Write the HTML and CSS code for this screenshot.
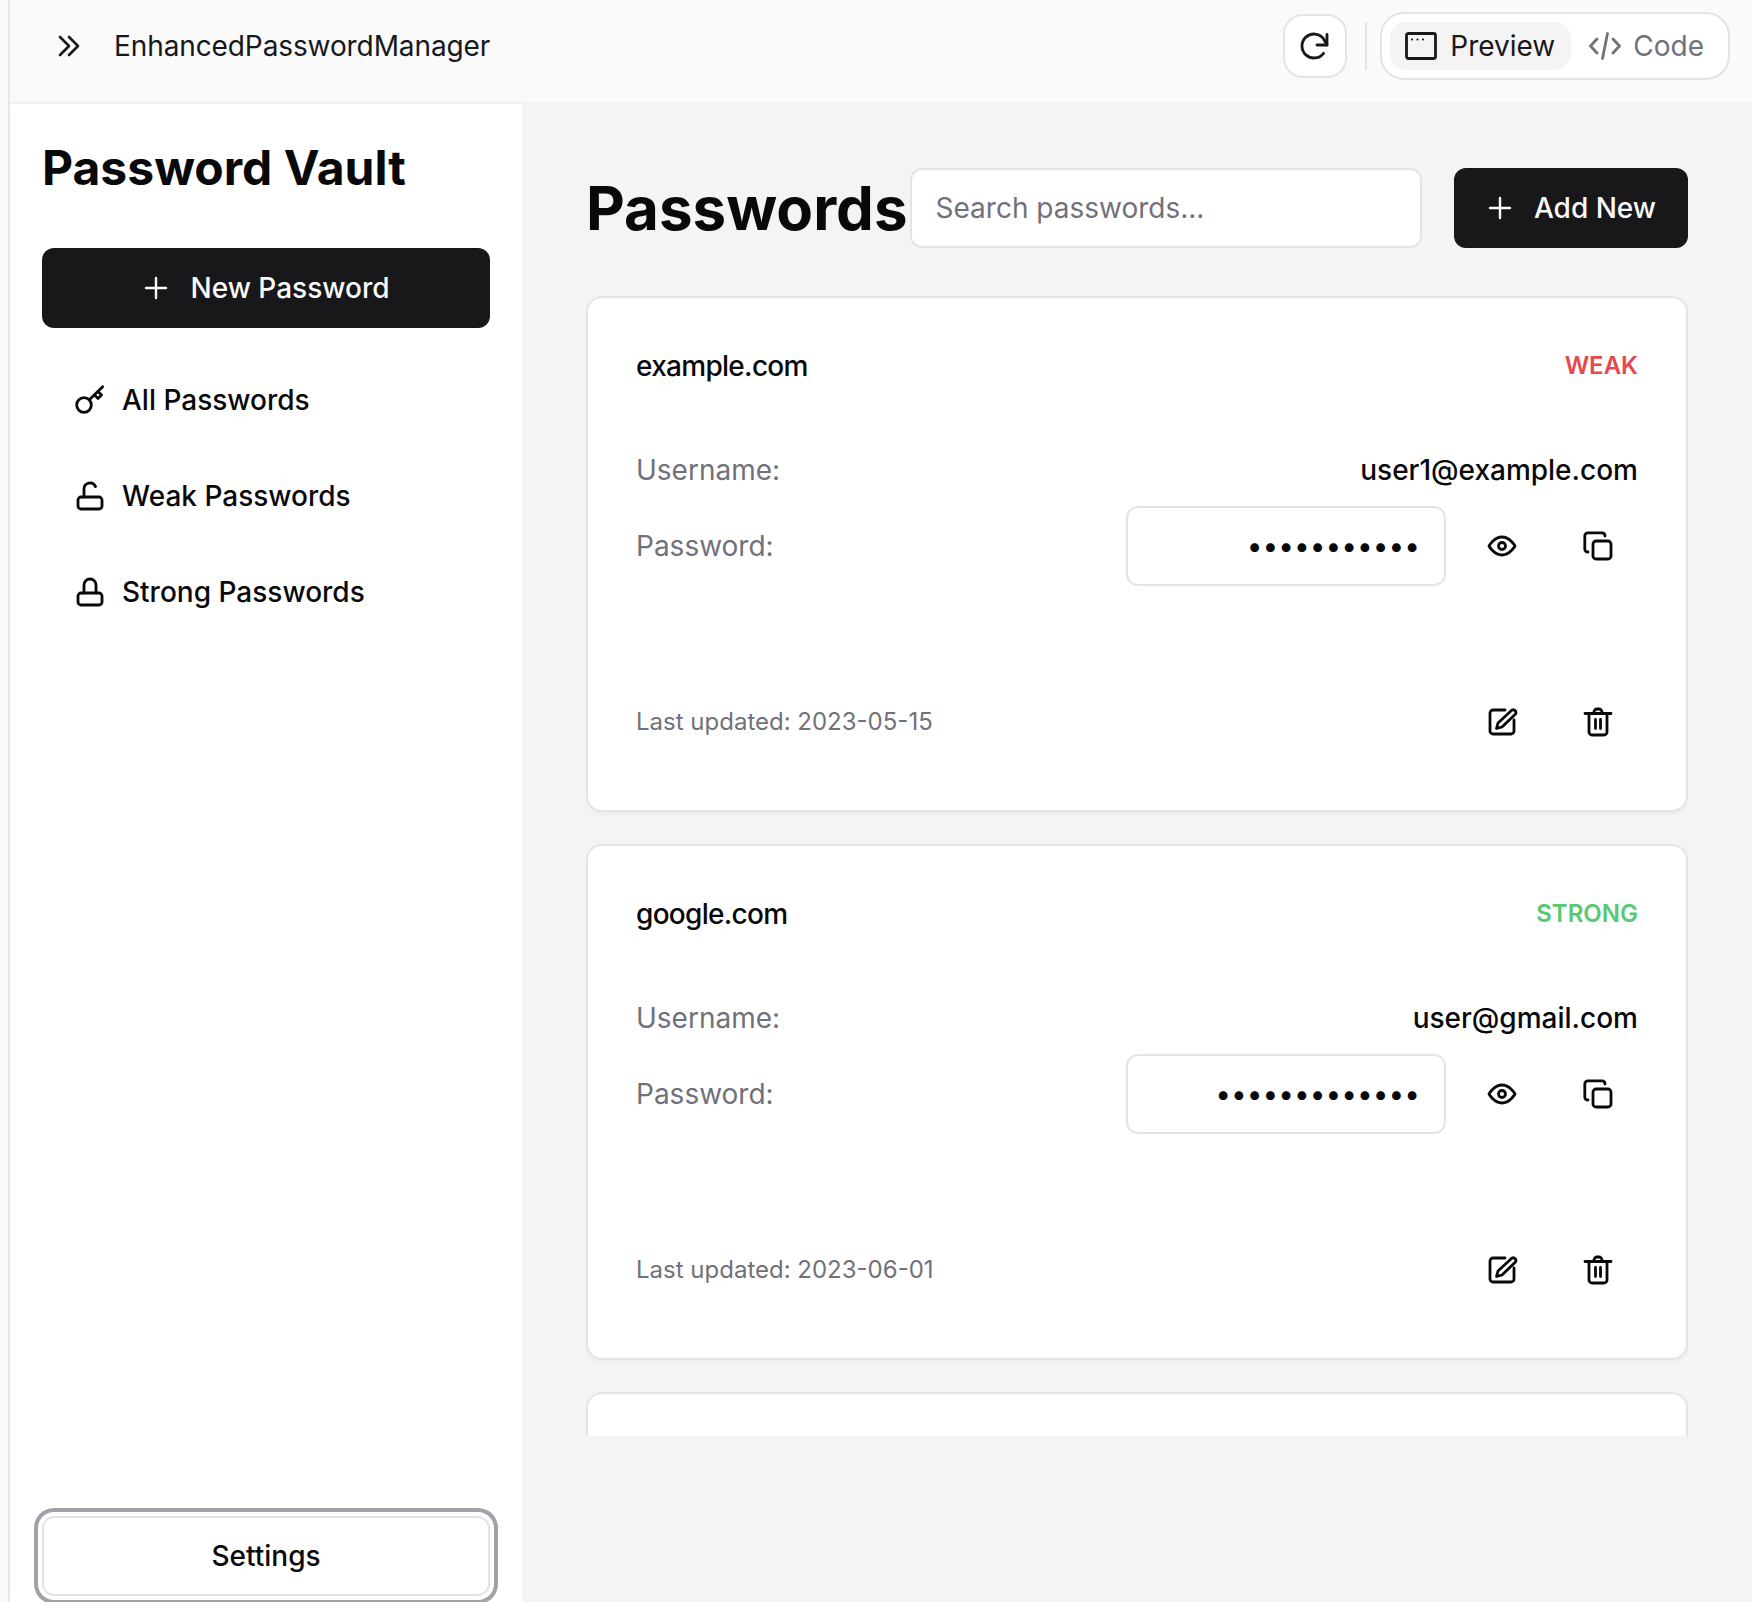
FILE: index.html
```html
<!DOCTYPE html>
<html lang="en">

<head>
    <meta charset="UTF-8">
    <title>EnhancedPasswordManager</title>
    <link rel="stylesheet" href="styles.css">
</head>

<body>
    <svg class="sprite" aria-hidden="true">
        <symbol id="i-chevrons" viewBox="0 0 28 28"><path d="M5 5 14 14 5 23M14 5 23 14 14 23" /></symbol>
        <symbol id="i-refresh" viewBox="0 0 32 32"><path d="M24.500 23.300A12 12 0 1 1 24.500 8.700L28 15" /><path d="M28 4.500V15H18" /></symbol>
        <symbol id="i-window" viewBox="0 0 32 28"><rect x="1.500" y="1.500" width="29" height="25" rx="2" /><path stroke-width="2.200" d="M7 7.500h.01M12.500 7.500h.01M18 7.500h.01" /></symbol>
        <symbol id="i-code" viewBox="0 0 32 28"><path d="m8 7-6.500 7L8 21M24 7l6.500 7L24 21M18.500 1.500l-5 25" /></symbol>
        <symbol id="i-plus" viewBox="0 0 28 28"><path d="M14 4v20M4 14h20" /></symbol>
        <symbol id="i-key" viewBox="0 0 32 32"><circle cx="10" cy="21" r="7.300" /><path d="M15.300 15.700 28.700 2.700M20.500 11l3.500 3.500 3.500-3.500-3.500-3.500" /></symbol>
        <symbol id="i-unlock" viewBox="0 0 32 32"><rect x="4" y="17" width="24" height="12" rx="3" /><path d="M10 17V9a6 6 0 0 1 11.500-2.400" /></symbol>
        <symbol id="i-lock" viewBox="0 0 32 32"><rect x="4" y="17" width="24" height="12" rx="3" /><path d="M10 17V9a6 6 0 0 1 12 0v8" /></symbol>
        <symbol id="i-eye" viewBox="0 0 32 32"><path d="M3 16s5-9 13-9 13 9 13 9-5 9-13 9-13-9-13-9Z" /><circle cx="16" cy="16" r="3.500" /></symbol>
        <symbol id="i-copy" viewBox="0 0 32 32"><rect x="11" y="11" width="18" height="18" rx="3" /><path d="M6 22c-2 0-3.200-1.300-3.200-3V6c0-2 1.300-3.200 3.200-3.200h14c1.800 0 3 1 3 3.200" /></symbol>
        <symbol id="i-edit" viewBox="0 0 32 32"><path d="M19 4H7a3 3 0 0 0-3 3v18a3 3 0 0 0 3 3h18a3 3 0 0 0 3-3V14" /><path d="M26 4a2.800 2.800 0 0 1 3.500 4L16 21l-5.500 1.500L12 17Z" /></symbol>
        <symbol id="i-trash" viewBox="0 0 32 32"><path d="M3 7.500h26M7 7.500V26a3 3 0 0 0 3 3h12a3 3 0 0 0 3-3V7.500M12 7.500V6a3 3 0 0 1 3-3h2a3 3 0 0 1 3 3v1.500M13.500 13.500v9M18.500 13.500v9" /></symbol>
    </svg>

    <div class="app">
        <header class="topbar">
            <svg class="icon chevrons"><use href="#i-chevrons" /></svg>
            <span class="project">EnhancedPasswordManager</span>
            <div class="topbar-actions">
                <button class="refresh"><svg class="icon"><use href="#i-refresh" /></svg></button>
                <span class="divider"></span>
                <div class="toggle">
                    <span class="tab active"><svg class="icon tab-icon"><use href="#i-window" /></svg>Preview</span>
                    <span class="tab"><svg class="icon tab-icon"><use href="#i-code" /></svg>Code</span>
                </div>
            </div>
        </header>

        <div class="content">
            <aside class="sidebar">
                <h1>Password Vault</h1>
                <button class="btn-dark btn-wide"><svg class="icon plus"><use href="#i-plus" /></svg>New Password</button>
                <nav class="menu">
                    <a href="#"><svg class="icon"><use href="#i-key" /></svg>All Passwords</a>
                    <a href="#"><svg class="icon"><use href="#i-unlock" /></svg>Weak Passwords</a>
                    <a href="#"><svg class="icon"><use href="#i-lock" /></svg>Strong Passwords</a>
                </nav>
                <button class="settings">Settings</button>
            </aside>

            <main class="main">
                <div class="main-head">
                    <h2>Passwords</h2>
                    <input class="search" type="text" placeholder="Search passwords...">
                    <button class="btn-dark btn-add"><svg class="icon plus"><use href="#i-plus" /></svg>Add New</button>
                </div>

                <div class="cards">
                    <section class="card">
                        <div class="card-head">
                            <span class="domain">example.com</span>
                            <span class="badge weak">WEAK</span>
                        </div>
                        <div class="row">
                            <span class="label">Username:</span>
                            <span class="value">user1@example.com</span>
                        </div>
                        <div class="row pass-row">
                            <span class="label">Password:</span>
                            <div class="pass-tools">
                                <input class="pass" type="password" value="password123" readonly>
                                <button class="tool"><svg class="icon"><use href="#i-eye" /></svg></button>
                                <button class="tool"><svg class="icon"><use href="#i-copy" /></svg></button>
                            </div>
                        </div>
                        <div class="card-foot">
                            <span class="updated">Last updated: 2023-05-15</span>
                            <div class="foot-tools">
                                <button class="tool"><svg class="icon"><use href="#i-edit" /></svg></button>
                                <button class="tool"><svg class="icon"><use href="#i-trash" /></svg></button>
                            </div>
                        </div>
                    </section>

                    <section class="card">
                        <div class="card-head">
                            <span class="domain">google.com</span>
                            <span class="badge strong">STRONG</span>
                        </div>
                        <div class="row">
                            <span class="label">Username:</span>
                            <span class="value">user@gmail.com</span>
                        </div>
                        <div class="row pass-row">
                            <span class="label">Password:</span>
                            <div class="pass-tools">
                                <input class="pass" type="password" value="StrongP@ss123" readonly>
                                <button class="tool"><svg class="icon"><use href="#i-eye" /></svg></button>
                                <button class="tool"><svg class="icon"><use href="#i-copy" /></svg></button>
                            </div>
                        </div>
                        <div class="card-foot">
                            <span class="updated">Last updated: 2023-06-01</span>
                            <div class="foot-tools">
                                <button class="tool"><svg class="icon"><use href="#i-edit" /></svg></button>
                                <button class="tool"><svg class="icon"><use href="#i-trash" /></svg></button>
                            </div>
                        </div>
                    </section>

                    <section class="card"></section>
                </div>
            </main>
        </div>
    </div>
</body>

</html>
```

FILE: styles.css
```css
* {
    box-sizing: border-box;
}

html,
body {
    height: 100%;
}

body {
    margin: 0;
    overflow: hidden;
    background-color: #fafafa;
    color: #09090b;
    font-family: Inter, "Noto Sans", sans-serif;
    font-size: 28px;
    line-height: 40px;
}

h1,
h2 {
    margin: 0;
    font-weight: 700;
}

button,
input {
    font: inherit;
    color: inherit;
}

button {
    cursor: pointer;
}

.sprite {
    display: none;
}

.icon {
    width: 32px;
    height: 32px;
    flex-shrink: 0;
    fill: none;
    stroke: currentColor;
    stroke-width: 2.8px;
    stroke-linecap: round;
    stroke-linejoin: round;
}

.app {
    display: flex;
    flex-direction: column;
    height: 100%;
    margin-left: 8px;
    border-left: 2px solid #e8e8ea;
}

/* top bar */
.topbar {
    display: flex;
    align-items: center;
    height: 104px;
    padding: 0 22px 10px 45px;
    background-color: #fafafa;
    border-bottom: 2px solid #f4f4f5;
    color: #18181b;
}

.chevrons {
    width: 28px;
    height: 28px;
    margin-right: 31px;
    stroke-width: 2.6px;
}

.project {
    letter-spacing: -0.1px;
}

.topbar-actions {
    display: flex;
    align-items: center;
    margin-left: auto;
}

.refresh {
    display: flex;
    align-items: center;
    justify-content: center;
    width: 64px;
    height: 64px;
    padding: 0;
    background-color: #fff;
    border: 2px solid #e4e4e7;
    border-radius: 20px;
}

.divider {
    width: 2px;
    height: 48px;
    margin: 0 13px 0 18px;
    background-color: #e4e4e7;
}

.toggle {
    display: flex;
    align-items: center;
    gap: 2px;
    height: 68px;
    padding: 0 8px;
    background-color: #fff;
    border: 2px solid #e4e4e7;
    border-radius: 24px;
}

.tab {
    display: flex;
    align-items: center;
    gap: 12px;
    height: 48px;
    padding: 0 16px;
    border-radius: 16px;
    color: #71717a;
}

.tab.active {
    gap: 13px;
    padding-left: 15px;
    background-color: #f4f4f5;
    color: #18181b;
}

.tab-icon {
    height: 28px;
}

/* layout */
.content {
    display: flex;
    flex: 1;
    min-height: 0;
}

.sidebar {
    display: flex;
    flex-direction: column;
    width: 512px;
    padding: 32px 32px 6px;
    background-color: #fff;
    box-shadow: 2px 0 6px rgba(0, 0, 0, 0.04);
}

.sidebar h1 {
    margin-bottom: 48px;
    font-size: 48px;
    line-height: 64px;
}

.btn-dark {
    display: flex;
    align-items: center;
    justify-content: center;
    gap: 20px;
    height: 80px;
    background-color: #18181b;
    border: 0;
    border-radius: 12px;
    color: #fafafa;
    font-weight: 500;
}

.btn-wide {
    flex-shrink: 0;
    width: 100%;
}

.plus {
    width: 28px;
    height: 28px;
    stroke-width: 2.4px;
}

.menu {
    display: flex;
    flex-direction: column;
    gap: 16px;
    margin-top: 32px;
}

.menu a {
    display: flex;
    align-items: center;
    gap: 16px;
    height: 80px;
    padding: 0 32px;
    color: #09090b;
    font-weight: 500;
    text-decoration: none;
}

.settings {
    flex-shrink: 0;
    width: 100%;
    height: 80px;
    margin-top: auto;
    background-color: #fff;
    border: 2px solid #e4e4e7;
    border-radius: 12px;
    font-weight: 500;
    box-shadow: 0 0 0 4px #fff, 0 0 0 8px #a1a1aa;
}

/* password list */
.main {
    display: flex;
    flex: 1;
    flex-direction: column;
    min-width: 0;
    padding: 64px 64px 166px;
    background-color: #f3f4f6;
}

.main-head {
    display: flex;
    align-items: center;
    margin-bottom: 48px;
}

.main-head h2 {
    margin-right: 2px;
    font-size: 60px;
    line-height: 72px;
}

.search {
    flex: 1;
    min-width: 0;
    height: 80px;
    margin-right: 32px;
    padding: 0 24px;
    background-color: #fff;
    border: 2px solid #e4e4e7;
    border-radius: 12px;
    outline: none;
}

.search::placeholder {
    color: #71717a;
}

.btn-add {
    width: 234px;
}

.cards {
    display: flex;
    flex: 1;
    flex-direction: column;
    gap: 32px;
    min-height: 0;
    overflow: hidden;
}

.card {
    flex-shrink: 0;
    min-height: 516px;
    padding: 48px;
    background-color: #fff;
    border: 2px solid #e4e4e7;
    border-radius: 16px;
    box-shadow: 0 2px 4px rgba(0, 0, 0, 0.04);
}

.card-head,
.row,
.card-foot {
    display: flex;
    align-items: center;
    justify-content: space-between;
}

.card-head {
    margin-bottom: 64px;
}

.domain {
    font-weight: 500;
    letter-spacing: -0.7px;
}

.value {
    font-weight: 500;
}

.badge {
    font-size: 24px;
    font-weight: 600;
}

.weak {
    color: #e5484d;
}

.strong {
    color: #5bc871;
}

.label,
.updated {
    color: #71717a;
}

.pass-row {
    margin-top: 16px;
}

.pass-tools,
.foot-tools {
    display: flex;
    align-items: center;
    gap: 16px;
}

.pass {
    width: 320px;
    height: 80px;
    padding: 0 24px;
    background-color: #fff;
    border: 2px solid #e4e4e7;
    border-radius: 12px;
    outline: none;
    text-align: right;
}

.tool {
    display: flex;
    align-items: center;
    justify-content: center;
    width: 80px;
    height: 80px;
    padding: 0;
    background: none;
    border: 0;
}

.card-foot {
    margin-top: 96px;
}

.updated {
    font-size: 24px;
}
```
